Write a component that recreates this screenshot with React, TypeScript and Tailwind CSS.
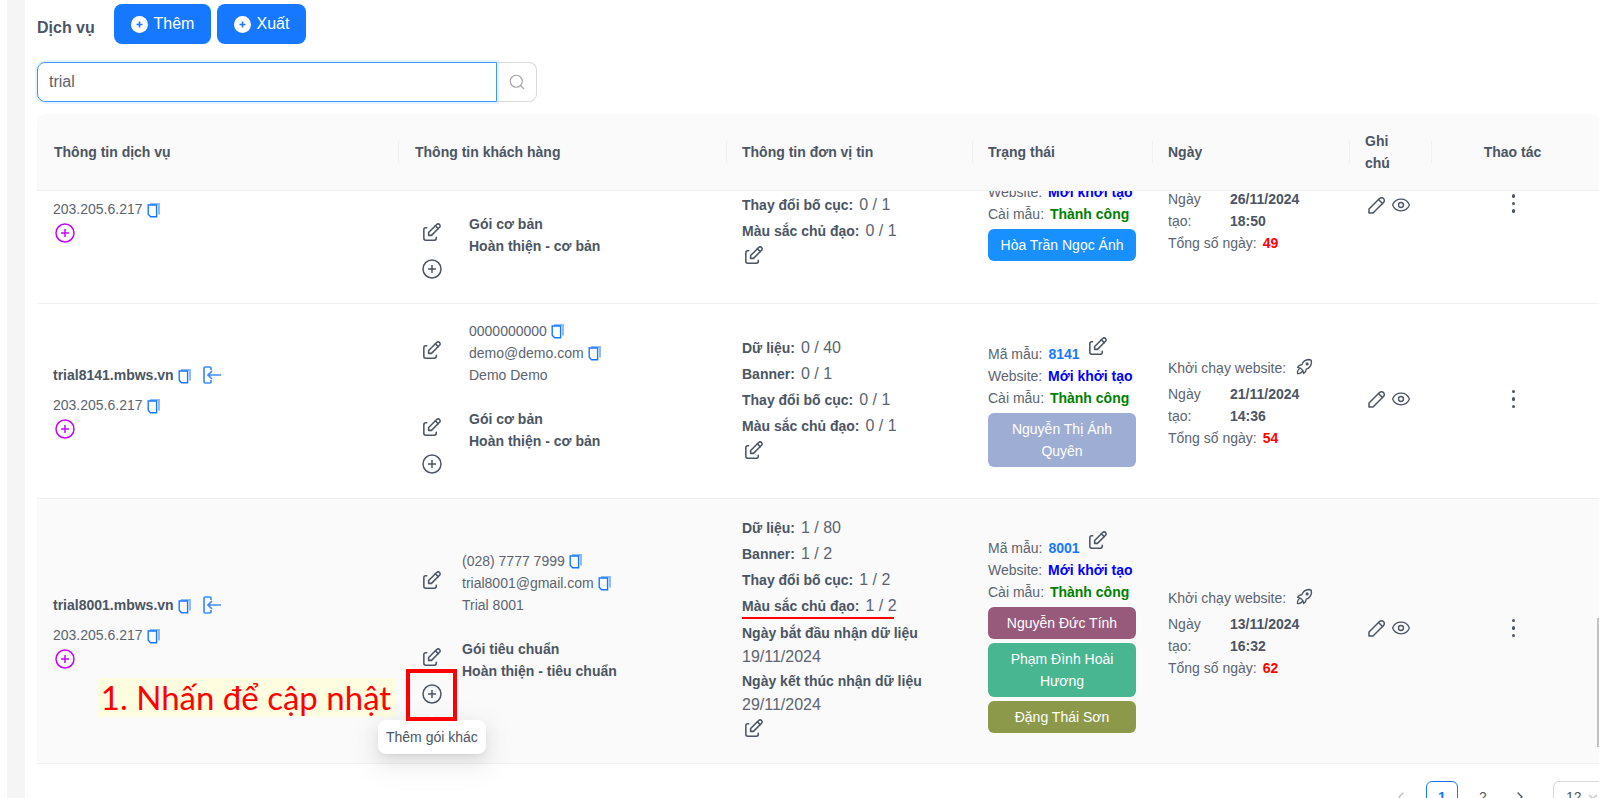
import { ReactNode } from "react";
import { ChevronDown, ChevronLeft, ChevronRight, Eye, Search } from "lucide-react";
import { TbEdit, TbPencil, TbRocket } from "react-icons/tb";

const COLS = "grid shrink-0 grid-cols-[361px_328px_246px_180px_197px_82px_163px]";

const CopyIcon = () => (
  <svg width="14" height="16" viewBox="0 0 14 16" className="inline-block shrink-0">
    <path d="M3 1h10v11.5h-2V3H3z" fill="#8fbcff" />
    <path d="M1.2 3H9.6v11.8H3.6L1.2 12.2z" fill="none" stroke="#1677ff" strokeWidth="1.4" />
  </svg>
);

const LoginIcon = () => (
  <svg width="20" height="20" viewBox="0 0 20 20" fill="none" stroke="#3f8cff" strokeWidth="1.7" className="shrink-0">
    <path d="M9 5V3.2C9 2.5 8.5 2 7.8 2H3.2C2.5 2 2 2.5 2 3.2v13.6c0 .7.5 1.2 1.2 1.2h4.6c.7 0 1.2-.5 1.2-1.2V15" />
    <path d="M19 10H6M10 6l-4 4 4 4" />
  </svg>
);

const PlusCircle = ({ color = "#4b5563" }: { color?: string }) => (
  <svg width="20" height="20" viewBox="0 0 20 20" fill="none" stroke={color} strokeWidth="1.5" className="shrink-0">
    <circle cx="10" cy="10" r="9" />
    <path d="M10 6v8M6 10h8" />
  </svg>
);

const FilledPlus = () => (
  <svg width="17" height="17" viewBox="0 0 17 17" className="shrink-0">
    <circle cx="8.5" cy="8.5" r="8.5" fill="#fff" />
    <path d="M8.5 5.5v6M5.5 8.5h6" stroke="#1677ff" strokeWidth="1.6" />
  </svg>
);

const Edit = () => <TbEdit size={23} strokeWidth={1.6} className="shrink-0 text-[#4b5563]" />;

const Label = ({ children }: { children: ReactNode }) => (
  <span className="font-bold text-[#4b5563]">{children}</span>
);

const ServiceCell = ({ domain }: { domain?: string }) => (
  <div className="flex flex-col pl-4">
    {domain && (
      <div className="mb-2 flex h-[22px] items-center text-sm font-bold text-[#4b5563]">
        {domain}
        <span className="ml-1"><CopyIcon /></span>
        <span className="ml-2.5"><LoginIcon /></span>
      </div>
    )}
    <div className="flex h-[22px] items-center text-sm text-[#5b6470]">
      203.205.6.217
      <span className="ml-1"><CopyIcon /></span>
    </div>
    <div className="ml-[2px] mt-[3px]"><PlusCircle color="#c800ff" /></div>
  </div>
);

const Usage = ({ label, value }: { label: string; value: string }) => (
  <div className="h-[26px] text-sm leading-[26px]">
    <Label>{label}</Label>
    <span className="ml-1.5 text-base text-[#5b6470]">{value}</span>
  </div>
);

const Status = ({ code }: { code?: string }) => (
  <div className="text-sm leading-[22px] text-[#5b6470]">
    {code && (
      <div className="flex items-end gap-1.5">
        <span>Mã mẫu:</span>
        <span className="font-bold text-[#1677ff]">{code}</span>
        <span className="mb-[7px]"><Edit /></span>
      </div>
    )}
    <div>
      Website: <span className="ml-0.5 font-bold text-[#0000ff]">Mới khởi tạo</span>
    </div>
    <div>
      Cài mẫu: <span className="ml-0.5 font-bold text-[#008000]">Thành công</span>
    </div>
  </div>
);

const Staff = ({ name, color }: { name: string; color: string }) => (
  <div className={`w-[148px] rounded-md px-3 py-[5px] text-center text-sm leading-[22px] text-white ${color}`}>
    {name}
  </div>
);

const Dates = ({ date, time, total, launch }: { date: string; time: string; total: string; launch?: boolean }) => (
  <div className={`pl-4 text-sm leading-[22px] text-[#5b6470] ${launch ? "pt-1" : ""}`}>
    {launch && (
      <div className="mb-1 flex h-[22px] items-center gap-2">
        Khởi chạy website:
        <TbRocket size={21} strokeWidth={1.5} className="mb-1 text-[#4b5563]" />
      </div>
    )}
    <div className="grid grid-cols-[62px_auto]">
      <span>Ngày</span>
      <span className="font-bold text-[#4b5563]">{date}</span>
      <span>tạo:</span>
      <span className="font-bold text-[#4b5563]">{time}</span>
    </div>
    <div>
      Tổng số ngày: <span className="ml-0.5 font-bold text-[#ff0000]">{total}</span>
    </div>
  </div>
);

const NoteIcons = () => (
  <div className="flex items-center gap-[2px] pl-4 text-[#4b5563]">
    <TbPencil size={24} strokeWidth={1.5} />
    <Eye size={20} strokeWidth={1.6} />
  </div>
);

const Dots = () => (
  <div className="flex flex-col items-center gap-1 pl-[2px]">
    <span className="size-[3.5px] rounded-full bg-[#4b5563]" />
    <span className="size-[3.5px] rounded-full bg-[#4b5563]" />
    <span className="size-[3.5px] rounded-full bg-[#4b5563]" />
  </div>
);

const HeadCell = ({ children, center }: { children: ReactNode; center?: boolean }) => (
  <div className="relative flex items-center pl-4 text-sm font-bold leading-[22px] text-[#4b5563]">
    <span className="absolute left-0 top-1/2 h-[22px] w-px -translate-y-1/2 bg-[#f0f0f0]" />
    <span className={center ? "w-full pr-4 text-center" : ""}>{children}</span>
  </div>
);

export default function App() {
  return (
    <div className="flex h-[798px] w-[1599px] overflow-hidden bg-white font-['Liberation_Sans',sans-serif]">
      <div className="ml-[7px] h-full w-[18px] shrink-0 bg-[#f5f5f5]" />

      <div className="ml-3 flex w-[1562px] shrink-0 flex-col">
        {/* toolbar */}
        <div className="flex h-[62px] shrink-0 items-start pt-1">
          <h2 className="mt-3 w-[77px] text-base font-bold leading-[24px] text-[#4b5563]">Dịch vụ</h2>
          <button className="flex h-10 w-[97px] items-center justify-center gap-1.5 rounded-lg bg-[#1677ff] text-base text-white">
            <FilledPlus /> Thêm
          </button>
          <button className="ml-1.5 flex h-10 w-[89px] items-center justify-center gap-1.5 rounded-lg bg-[#1677ff] text-base text-white">
            <FilledPlus /> Xuất
          </button>
        </div>

        {/* search */}
        <div className="flex h-10 w-[500px] shrink-0">
          <div className="flex h-10 w-[460px] items-center rounded-l-lg border border-[#4096ff] px-[11px] text-base text-[#5b6470] shadow-[0_0_0_2px_rgba(5,145,255,0.1)]">
            trial
          </div>
          <div className="flex h-10 w-10 items-center justify-center rounded-r-lg border border-l-0 border-[#d9d9d9]">
            <Search size={18} strokeWidth={1.5} className="text-[#a3a3a3]" />
          </div>
        </div>

        {/* table head */}
        <div className={`${COLS} mt-3 h-[77px] rounded-t-lg border-b border-[#f0f0f0] bg-[#fafafa]`}>
          <div className="flex items-center pl-[17px] text-sm font-bold text-[#4b5563]">Thông tin dịch vụ</div>
          <HeadCell>
            <span className="ml-px">Thông tin khách hàng</span>
          </HeadCell>
          <HeadCell>Thông tin đơn vị tin</HeadCell>
          <HeadCell>Trạng thái</HeadCell>
          <HeadCell>Ngày</HeadCell>
          <HeadCell>
            Ghi
            <br />
            chú
          </HeadCell>
          <HeadCell center>Thao tác</HeadCell>
        </div>

        {/* row clipped by the sticky head */}
        <div className={`${COLS} h-[113px] grid-rows-[112px] overflow-hidden border-b border-[#f0f0f0]`}>
          <div className="flex flex-col justify-end pb-[60px]">
            <ServiceCell />
          </div>
          <div className="flex flex-col justify-end pb-[24px] pl-[22px]">
            <div className="flex">
              <div className="flex w-[49px] flex-col items-start gap-[15px] pt-[8px]">
                <Edit />
                <span className="ml-[2px]"><PlusCircle /></span>
              </div>
              <div className="text-sm font-bold leading-[22px] text-[#4b5563]">
                <div>Gói cơ bản</div>
                <div>Hoàn thiện - cơ bản</div>
              </div>
            </div>
          </div>
          <div className="flex flex-col items-start justify-end pb-[36px] pl-4">
            <Usage label="Thay đổi bố cục:" value="0 / 1" />
            <Usage label="Màu sắc chủ đạo:" value="0 / 1" />
            <Edit />
          </div>
          <div className="flex flex-col justify-end gap-1 pb-[42px] pl-4">
            <Status />
            <Staff name="Hòa Trần Ngọc Ánh" color="bg-[#1890ff]" />
          </div>
          <div className="flex flex-col justify-end pb-[49px]">
            <Dates date="26/11/2024" time="18:50" total="49" />
          </div>
          <div className="pt-[2px]"><NoteIcons /></div>
          <div className="pt-[3px]"><Dots /></div>
        </div>

        {/* trial8141 */}
        <div className={`${COLS} h-[195px] items-center border-b border-[#f0f0f0]`}>
          <ServiceCell domain="trial8141.mbws.vn" />
          <div className="flex flex-col gap-[22px] pb-2 pl-[22px]">
            <div className="flex">
              <div className="flex w-[49px] items-center pb-[6px]"><Edit /></div>
              <div className="text-sm leading-[22px] text-[#5b6470]">
                <div className="flex items-center gap-1">0000000000 <CopyIcon /></div>
                <div className="flex items-center gap-1">demo@demo.com <CopyIcon /></div>
                <div>Demo Demo</div>
              </div>
            </div>
            <div className="flex">
              <div className="flex w-[49px] flex-col items-start gap-[15px] pt-[8px]">
                <Edit />
                <span className="ml-[2px]"><PlusCircle /></span>
              </div>
              <div className="text-sm font-bold leading-[22px] text-[#4b5563]">
                <div>Gói cơ bản</div>
                <div>Hoàn thiện - cơ bản</div>
              </div>
            </div>
          </div>
          <div className="pb-[6px] pl-4">
            <Usage label="Dữ liệu:" value="0 / 40" />
            <Usage label="Banner:" value="0 / 1" />
            <Usage label="Thay đổi bố cục:" value="0 / 1" />
            <Usage label="Màu sắc chủ đạo:" value="0 / 1" />
            <Edit />
          </div>
          <div className="flex flex-col gap-1 pl-4">
            <Status code="8141" />
            <Staff name="Nguyễn Thị Ánh Quyên" color="bg-[#9eadd3]" />
          </div>
          <Dates date="21/11/2024" time="14:36" total="54" launch />
          <div className="pb-1"><NoteIcons /></div>
          <div className="pb-1"><Dots /></div>
        </div>

        {/* trial8001, hovered */}
        <div className={`${COLS} h-[265px] items-center border-b border-[#f0f0f0] bg-[#fafafa]`}>
          <ServiceCell domain="trial8001.mbws.vn" />
          <div className="flex flex-col gap-[22px] pb-2 pl-[22px]">
            <div className="flex">
              <div className="flex w-[42px] items-center pb-[6px]"><Edit /></div>
              <div className="text-sm leading-[22px] text-[#5b6470]">
                <div className="flex items-center gap-1">(028) 7777 7999 <CopyIcon /></div>
                <div className="flex items-center gap-1">trial8001@gmail.com <CopyIcon /></div>
                <div>Trial 8001</div>
              </div>
            </div>
            <div className="flex">
              <div className="flex w-[42px] flex-col items-start gap-[15px] pt-[8px]">
                <Edit />
                <div className="relative ml-[2px]">
                  <PlusCircle />
                  {/* tutorial annotation */}
                  <div className="absolute -left-[16px] -top-[15px] z-20 h-[52px] w-[51px] border-4 border-[#ff0000]" />
                  <div className="absolute right-[47px] -top-[6px] flex h-[39px] w-[298px] items-center justify-center whitespace-nowrap bg-[#fffde0] font-['Lato',sans-serif] text-[33px] text-[#ff0000]">
                    1. Nhấn để cập nhật
                  </div>
                  {/* tooltip */}
                  <span className="absolute left-[6px] top-[32px] z-10 size-2 rotate-45 bg-white" />
                  <div className="absolute -left-[44px] top-[36px] z-10 whitespace-nowrap rounded-lg bg-white px-2 py-[6px] text-sm leading-[22px] text-[#4b5563] shadow-[0_6px_16px_rgba(0,0,0,0.08),0_3px_6px_-4px_rgba(0,0,0,0.12),0_9px_28px_8px_rgba(0,0,0,0.05)]">
                    Thêm gói khác
                  </div>
                </div>
              </div>
              <div className="text-sm font-bold leading-[22px] text-[#4b5563]">
                <div>Gói tiêu chuẩn</div>
                <div>Hoàn thiện - tiêu chuẩn</div>
              </div>
            </div>
          </div>
          <div className="pb-2 pl-4">
            <Usage label="Dữ liệu:" value="1 / 80" />
            <Usage label="Banner:" value="1 / 2" />
            <Usage label="Thay đổi bố cục:" value="1 / 2" />
            <div className="relative">
              <Usage label="Màu sắc chủ đạo:" value="1 / 2" />
              <span className="absolute left-0 top-[24px] h-[2px] w-[152px] bg-[#ff0000]" />
            </div>
            <div className="mt-[2px] text-sm font-bold leading-[24px] text-[#4b5563]">Ngày bắt đầu nhận dữ liệu</div>
            <div className="text-base leading-[24px] text-[#5b6470]">19/11/2024</div>
            <div className="text-sm font-bold leading-[24px] text-[#4b5563]">Ngày kết thúc nhận dữ liệu</div>
            <div className="text-base leading-[24px] text-[#5b6470]">29/11/2024</div>
            <Edit />
          </div>
          <div className="flex flex-col gap-1 pl-4">
            <Status code="8001" />
            <Staff name="Nguyễn Đức Tính" color="bg-[#975a7b]" />
            <Staff name="Phạm Đình Hoài Hương" color="bg-[#48b690]" />
            <Staff name="Đặng Thái Sơn" color="bg-[#8c994b]" />
          </div>
          <Dates date="13/11/2024" time="16:32" total="62" launch />
          <div className="pb-[6px]"><NoteIcons /></div>
          <div className="pb-[6px]"><Dots /></div>
        </div>

        {/* pagination */}
        <div className="mt-[17px] flex shrink-0 items-start justify-end text-sm text-[#4b5563]">
          <ChevronLeft size={16} className="mt-2 text-[#bfbfbf]" />
          <div className="ml-[17px] flex size-8 items-center justify-center rounded-md border border-[#1677ff] font-bold text-[#1677ff]">1</div>
          <div className="ml-[9px] flex size-8 items-center justify-center">2</div>
          <ChevronRight size={16} className="ml-[13px] mt-2" />
          <div className="ml-[25px] flex h-8 w-[46px] items-center gap-1 rounded-l-md border border-r-0 border-[#d9d9d9] pl-3">
            12
            <ChevronDown size={14} className="shrink-0 text-[#bfbfbf]" />
          </div>
        </div>
      </div>

      {/* page scrollbar thumb */}
      <div className="-ml-[2px] mt-[618px] h-[129px] w-[2px] shrink-0 bg-[#c1c1c1]" />
    </div>
  );
}
